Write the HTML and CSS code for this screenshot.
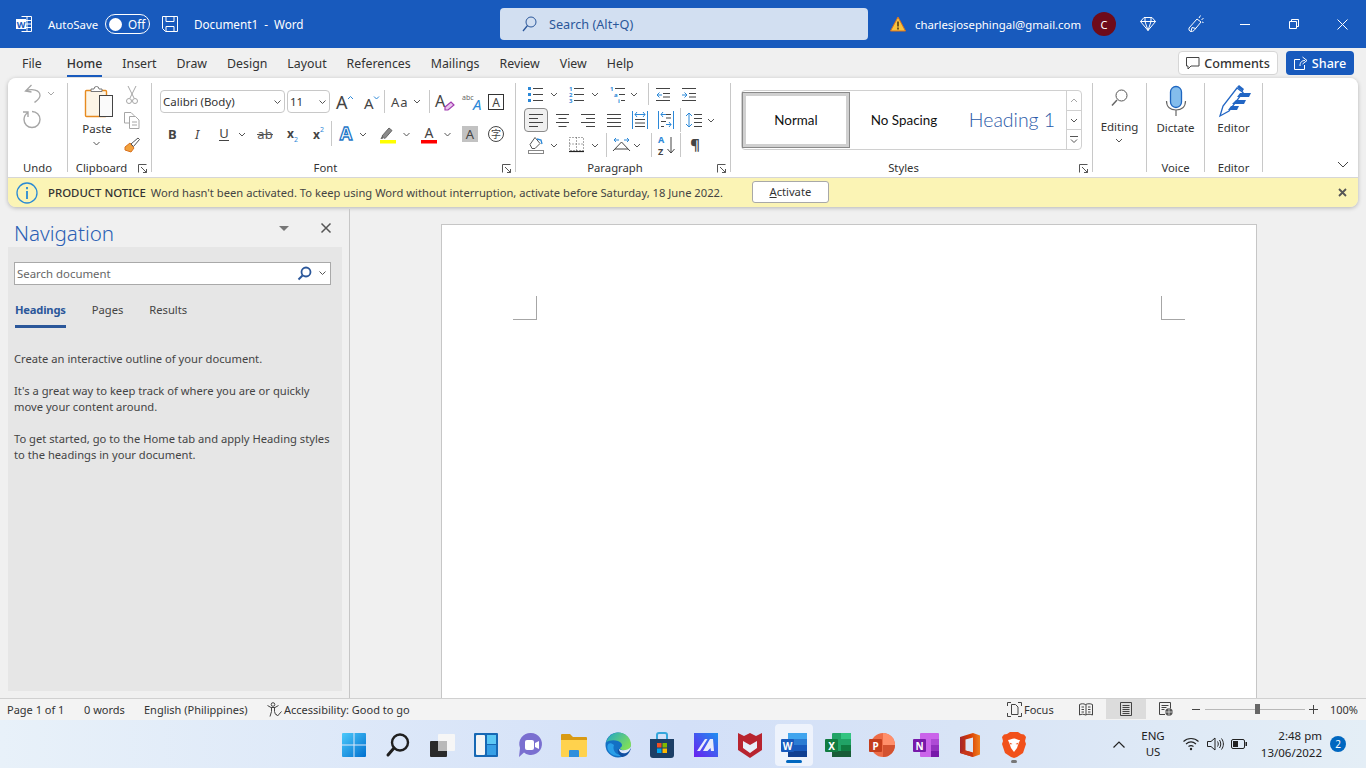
FILE: index.html
```html
<!DOCTYPE html>
<html lang="en">
<head>
    <meta charset="UTF-8">
    <title>Document1 - Word</title>
    <link rel="stylesheet" href="styles.css">
</head>
<body>
    <!-- title bar -->
    <header class="titlebar">
        <svg class="tb-logo" width="16" height="16" viewBox="0 0 16 16"><path class="w-ln" d="M5.500 .5h10v15h-10M9 4.500h6.500M9 8h6.500M9 11.500h6.500M11 .5v15"/><rect x="0" y="3" width="10" height="10" fill="#fff"/><text class="ic-t" x="5" y="11.500" text-anchor="middle" font-size="9" font-weight="700" fill="#185abd">W</text></svg>
        <span class="autosave">AutoSave</span>
        <span class="toggle"><i class="knob"></i><span>Off</span></span>
        <svg class="tb-save" width="16" height="16" viewBox="0 0 16 16"><path class="w-ln" d="M.5 .5h15v15h-12l-3-3zM4 .5v5h8v-5M4 15.500v-5h8v5"/></svg>
        <span class="doc-title">Document1&nbsp; -&nbsp; Word</span>
        <div class="searchbox">
            <svg width="15" height="16" viewBox="0 0 15 16"><circle cx="9" cy="6" r="5" fill="none" stroke="#2b579a"/><path d="M5.500 9.500 1 15" stroke="#2b579a" stroke-width="1.300"/></svg>
            <span>Search (Alt+Q)</span>
        </div>
        <svg class="tb-warn" width="16" height="16" viewBox="0 0 16 16"><path d="M8 1 15.500 15H.5z" fill="#f7c33d" stroke="#d9701e"/><path d="M8 5.500v5M8 11.500v2" stroke="#4a3410" stroke-width="1.500"/></svg>
        <span class="email">charlesjosephingal@gmail.com</span>
        <span class="avatar">C</span>
        <svg class="tb-diamond" width="16" height="16" viewBox="0 0 16 16"><path class="w-ln" d="M4 1.500h8l3.500 4L8 14.500.5 5.500zM.5 5.500h15M5 1.500 5 5.500 8 14.500 11 5.500 11 1.500"/></svg>
        <svg class="tb-pen" width="16" height="18" viewBox="0 0 16 18"><path class="w-ln" d="M1 13 9 4l4 3-7 8.500c-2 1.500-4 1.500-5-.5zM3 16.500l1-4 4 1M11 3l1.500-2.500M13.500 4.500l2-1M14 7l1.500.5"/></svg>
        <svg class="tb-min" width="10" height="10" viewBox="0 0 10 10"><path class="w-ln" d="M0 5.500h10"/></svg>
        <svg class="tb-max" width="10" height="10" viewBox="0 0 10 10"><path class="w-ln" d="M.5 2.500h7v7h-7zM2.500 2.500V.5h7v7h-2"/></svg>
        <svg class="tb-close" width="11" height="11" viewBox="0 0 11 11"><path class="w-ln" d="M.5 .5l10 10M10.500 .5l-10 10"/></svg>
    </header>

    <!-- tabs -->
    <nav class="tabs">
        <a class="tab tab-file">File</a>
        <a class="tab tab-home">Home</a>
        <a class="tab">Insert</a>
        <a class="tab">Draw</a>
        <a class="tab">Design</a>
        <a class="tab">Layout</a>
        <a class="tab">References</a>
        <a class="tab">Mailings</a>
        <a class="tab">Review</a>
        <a class="tab">View</a>
        <a class="tab">Help</a>
        <button class="btn-comments">
            <svg width="14" height="14" viewBox="0 0 14 14"><path class="ln-d" d="M.5 1.500h12.500v8.500H5l-3 3v-3H.5z"/></svg>
            Comments
        </button>
        <button class="btn-share">
            <svg width="14" height="14" viewBox="0 0 14 14"><path class="w-ln" d="M6 3.500H.5v10h10V9M6 10c0-4 2-5.500 5-5.500M8.500 1l4.500 3.500-4.500 3.500"/></svg>
            Share
        </button>
    </nav>

    <!-- ribbon -->
    <div class="ribbon-wrap">
        <section class="ribbon">
            <div class="group g-undo">
                <svg width="59" height="26" viewBox="0 0 59 26"><path class="ln-dis" stroke-width="1.300" d="M23.500 2 17.500 8l6 1M17.500 8c6-2.500 14.500-1.500 14.500 4.500 0 3-3 5-5.500 7"/><path class="ln-dis" d="M40 9l3 3 3-3"/></svg>
                <svg width="59" height="24" viewBox="0 0 59 24"><path class="ln-dis" stroke-width="1.400" d="M20 3.500c-3 2-4 4.500-4 7a8 8 0 1 0 8-8M15 3h5V8"/></svg>
                <div class="foot"><span class="glabel">Undo</span></div>
            </div>

            <div class="group g-clip">
                <div class="clip-body">
                    <div class="paste">
                        <svg width="56" height="34" viewBox="0 0 56 34"><rect x="17.500" y="7.500" width="21" height="26" rx="1" fill="#fdf5e6" stroke="#e78a1e" stroke-width="1.400"/><path d="M23 8.500v-2.500h3a2.500 2.500 0 0 1 5 0h3v2.500z" fill="#fff" stroke="#777"/><rect x="31.500" y="12.500" width="13" height="21" fill="#fafafa" stroke="#444"/></svg>
                        <span>Paste</span>
                        <svg width="56" height="13" viewBox="0 0 56 13"><path class="ln" d="M25.500 5l3 3 3-3"/></svg>
                    </div>
                    <div class="clip-side">
                        <svg width="16" height="26" viewBox="0 0 16 26"><path class="ln-dis" d="M4 1l6 12M12 1 6 13"/><circle class="ln-dis" cx="5" cy="16" r="2.500"/><circle class="ln-dis" cx="11" cy="16" r="2.500"/></svg>
                        <svg width="16" height="26" viewBox="0 0 16 26"><path class="ln-dis" d="M5 12H.5V1.500H7l3 3v1M5.500 5.500h6l3.500 3.500v8.500H5.500zM8 11h5M8 14h5"/></svg>
                        <svg width="16" height="20" viewBox="0 0 16 20"><path d="M1 10l5-4 4 5-3 4-6-2z" fill="#f2a13c" stroke="#d9701e"/><path d="M7 7l7-6 1.500 1.500-6 7z" fill="#fff" stroke="#555"/></svg>
                    </div>
                </div>
                <div class="foot"><span class="glabel">Clipboard</span><svg class="launch" width="16" height="14" viewBox="0 0 16 14"><path class="ln" d="M3.500 11.500v-8h8M6 6l5.500 5.500M11.500 8v3.500H8"/></svg></div>
            </div>

            <div class="group g-font">
                <div class="frow f1">
                    <div class="select s-font">Calibri (Body)<svg width="7" height="4" viewBox="0 0 7 4"><path class="ln" d="M.5 .5l3 3 3-3"/></svg></div>
                    <div class="select s-size">11<svg width="7" height="4" viewBox="0 0 7 4"><path class="ln" d="M.5 .5l3 3 3-3"/></svg></div>
                    <svg width="34" height="20" viewBox="0 0 34 20"><text class="ic-t" x="6" y="17" font-size="18" fill="#444">A</text><path d="M18 7l2.500-2.500L23 7" fill="none" stroke="#2b88d8"/></svg>
                    <svg width="20" height="20" viewBox="0 0 20 20"><text class="ic-t" x="0" y="16.500" font-size="15" fill="#444">A</text><path d="M10 4.500l2.500 2.500L15 4.500" fill="none" stroke="#2b88d8"/></svg>
                    <span class="vr"></span>
                    <svg width="44" height="20" viewBox="0 0 44 20"><text class="ic-t" x="6" y="15" font-size="13" letter-spacing="1" fill="#444">Aa</text><path class="ln" d="M29 8l3 3 3-3"/></svg>
                    <span class="vr"></span>
                    <svg width="32" height="20" viewBox="0 0 32 20"><text class="ic-t" x="5" y="15" font-size="16" fill="#444">A</text><path d="M15 15l6-5 3 3-6 5h-3z" fill="#e9c7ee" stroke="#a23cb0" stroke-width="1.200"/></svg>
                    <svg width="26" height="20" viewBox="0 0 26 20"><text class="ic-t" x="0" y="8" font-size="7" fill="#666">abc</text><text class="ic-t" x="11" y="18" font-size="15" font-style="italic" fill="#2b88d8">A</text></svg>
                    <svg width="16" height="16" viewBox="0 0 16 16"><rect x=".5" y=".5" width="15" height="15" fill="none" stroke="#333"/><text class="ic-t" x="8" y="13" text-anchor="middle" font-size="12" fill="#444">A</text></svg>
                </div>
                <div class="frow f2">
                    <svg width="30" height="18" viewBox="0 0 30 18"><text class="ic-t" x="8" y="14" font-size="13" font-weight="700" fill="#444">B</text></svg>
                    <svg width="24" height="18" viewBox="0 0 24 18"><text class="ic-t" x="5" y="14" font-size="13" font-style="italic" fill="#444">I</text></svg>
                    <svg width="20" height="18" viewBox="0 0 20 18"><text class="ic-t" x="10" y="13" text-anchor="middle" font-size="13" fill="#444">U</text><path class="ln-d" d="M5 15.500h10"/></svg>
                    <svg width="16" height="18" viewBox="0 0 16 18"><path class="ln" d="M5 8l3 3 3-3"/></svg>
                    <svg width="32" height="18" viewBox="0 0 32 18"><text class="ic-t" x="15" y="14" text-anchor="middle" font-size="13" fill="#555">ab</text><path class="ln" d="M7 9.500h16"/></svg>
                    <svg width="24" height="18" viewBox="0 0 24 18"><text class="ic-t" x="5" y="13" font-size="12" font-weight="700" fill="#444">x</text><text class="ic-t" x="12" y="17" font-size="7" fill="#2b88d8">2</text></svg>
                    <svg width="25" height="18" viewBox="0 0 25 18"><text class="ic-t" x="7" y="14" font-size="12" font-weight="700" fill="#444">x</text><text class="ic-t" x="14" y="7" font-size="7" fill="#2b88d8">2</text></svg>
                    <span class="vr"></span>
                    <svg width="26" height="18" viewBox="0 0 26 18"><text class="ic-t" x="14" y="15" text-anchor="middle" font-size="18" font-weight="700" fill="#fff" stroke="#1e78c8" stroke-width="1.300">A</text></svg>
                    <svg width="12" height="18" viewBox="0 0 12 18"><path class="ln" d="M2 8l3 3 3-3"/></svg>
                    <svg width="30" height="18" viewBox="0 0 30 18"><path d="M12 11l7-8 3 2.500-7 8z" fill="#8a8a8a" stroke="#666"/><path d="M12 11l-1.500 3 3-.5" fill="#555"/><rect x="10" y="15" width="16" height="3.500" fill="#ffff00"/></svg>
                    <svg width="14" height="18" viewBox="0 0 14 18"><path class="ln" d="M3.500 8l3 3 3-3"/></svg>
                    <svg width="26" height="18" viewBox="0 0 26 18"><text class="ic-t" x="15" y="13" text-anchor="middle" font-size="14" fill="#444">A</text><rect x="7" y="15" width="16" height="3.500" fill="#ff0000"/></svg>
                    <svg width="16" height="18" viewBox="0 0 16 18"><path class="ln" d="M4.500 8l3 3 3-3"/></svg>
                    <svg width="26" height="18" viewBox="0 0 26 18"><rect x="6" y="1" width="16" height="16" fill="#c2c2c2"/><text class="ic-t" x="14" y="14" text-anchor="middle" font-size="13" fill="#444">A</text></svg>
                    <svg width="28" height="18" viewBox="0 0 28 18"><circle cx="14" cy="9" r="7.500" fill="none" stroke="#444"/><text class="ic-c" x="14" y="13" text-anchor="middle" font-size="10" fill="#444">字</text></svg>
                </div>
                <div class="foot"><span class="glabel">Font</span><svg class="launch" width="16" height="14" viewBox="0 0 16 14"><path class="ln" d="M3.500 11.500v-8h8M6 6l5.500 5.500M11.500 8v3.500H8"/></svg></div>
            </div>

            <div class="group g-para">
                <div class="prow p1">
                    <svg width="32" height="20" viewBox="0 0 32 20"><path d="M12 3h3v3h-3zM12 9h3v3h-3zM12 15h3v3h-3z" fill="#2b88d8"/><path class="ln-d" d="M17 4.500h10M17 10.500h10M17 16.500h10"/></svg>
                    <svg width="12" height="20" viewBox="0 0 12 20"><path class="ln" d="M3 9l3 3 3-3"/></svg>
                    <svg width="29" height="20" viewBox="0 0 29 20"><text class="ic-t" font-size="6" font-weight="700" fill="#2b88d8"><tspan x="9" y="7">1</tspan><tspan x="9" y="13">2</tspan><tspan x="9" y="19">3</tspan></text><path class="ln-d" d="M14 4.500h10M14 10.500h10M14 16.500h10"/></svg>
                    <svg width="12" height="20" viewBox="0 0 12 20"><path class="ln" d="M3 9l3 3 3-3"/></svg>
                    <svg width="27" height="20" viewBox="0 0 27 20"><text class="ic-t" font-size="6" font-weight="700" fill="#2b88d8"><tspan x="9" y="7">1</tspan><tspan x="13" y="13">a</tspan><tspan x="17" y="19">i</tspan></text><path class="ln-d" d="M14 4.500h10M18 10.500h6M20 16.500h4"/></svg>
                    <svg width="20" height="20" viewBox="0 0 20 20"><path class="ln" d="M3 9l3 3 3-3"/></svg>
                    <span class="vr"></span>
                    <svg width="26" height="20" viewBox="0 0 26 20"><path class="ln-d" d="M7 4.500h14M14 9.500h7M14 13h7M7 16.500h14"/><path class="ln-b" d="M8 11h5M10.500 8.500 8 11l2.500 2.500"/></svg>
                    <svg width="26" height="20" viewBox="0 0 26 20"><path class="ln-d" d="M7 4.500h14M14 9.500h7M14 13h7M7 16.500h14"/><path class="ln-b" d="M7 11h5M9.500 8.500 12 11l-2.500 2.500"/></svg>
                </div>
                <div class="prow p2">
                    <span class="align-on"><svg width="14" height="13" viewBox="0 0 14 13"><path class="ln-d" d="M0 .5h14M0 4.500h9M0 8.500h14M0 12.500h9"/></svg></span>
                    <svg width="27" height="14" viewBox="0 0 27 14"><path class="ln-d" d="M8 1.500h13M10.500 5.500h8M8 9.500h13M10.500 13.500h8"/></svg>
                    <svg width="26" height="14" viewBox="0 0 26 14"><path class="ln-d" d="M6 1.500h14M11 5.500h9M6 9.500h14M11 13.500h9"/></svg>
                    <svg width="26" height="14" viewBox="0 0 26 14"><path class="ln-d" d="M6 1.500h14M6 5.500h14M6 9.500h14M6 13.500h14"/></svg>
                    <svg width="26" height="18" viewBox="0 0 26 18"><path class="ln-b" d="M5.500 0v18M20.500 0v18M8 3.500h10M10 1l-2 2.500L10 6M16 1l2 2.500L16 6"/><path class="ln-d" d="M8 8.500h10M8 12h10M8 15.500h10"/></svg>
                    <svg width="26" height="18" viewBox="0 0 26 18"><path class="ln-b" d="M5.500 0v18M20.500 0v18M8 3.500h5M10 1 8 3.500 10 6M13 13.500h5M16 11l2 2.500L16 16"/><path class="ln-d" d="M13 3.500h5M13 7h5M8 10.500h5M8 15.500h3"/></svg>
                    <span class="vr vr-p"></span>
                    <svg width="23" height="20" viewBox="0 0 23 20"><path class="ln-b" d="M8 3v14M5 6l3-3 3 3M5 14l3 3 3-3"/><path class="ln-d" d="M13 4.500h8M13 8.500h8M13 12.500h8M13 16.500h8"/></svg>
                    <svg width="14" height="20" viewBox="0 0 14 20"><path class="ln" d="M4 9l3 3 3-3"/></svg>
                </div>
                <div class="prow p3">
                    <svg width="32" height="20" viewBox="0 0 32 20"><path class="ln" d="M14 9.500l5-7 5 6-5 5h-3z"/><path d="M21 4l4 1 1 4" fill="none" stroke="#2b88d8" stroke-width="1.300"/><rect x="12.500" y="15.500" width="15" height="3" fill="#fff" stroke="#888"/></svg>
                    <svg width="12" height="20" viewBox="0 0 12 20"><path class="ln" d="M3 9l3 3 3-3"/></svg>
                    <svg width="29" height="20" viewBox="0 0 29 20"><path d="M9.500 2.500h14v13h-14zM16.500 2.500v13M9.500 9h14" fill="none" stroke="#555" stroke-dasharray="1 2"/><path d="M9 16.500h15" fill="none" stroke="#222" stroke-width="1.200"/></svg>
                    <svg width="17" height="20" viewBox="0 0 17 20"><path class="ln" d="M3 9l3 3 3-3"/></svg>
                    <span class="vr"></span>
                    <svg width="24" height="20" viewBox="0 0 24 20"><path class="ln-d" d="M6 16 14.500 7 23 16M8 14h13"/><path class="ln-b" d="M7 5h5M9 3 7 5l2 2M17 5h5M20 3l2 2-2 2"/></svg>
                    <svg width="20" height="20" viewBox="0 0 20 20"><path class="ln" d="M3 9l3 3 3-3"/></svg>
                    <span class="vr"></span>
                    <svg width="28" height="20" viewBox="0 0 28 20"><text class="ic-t" x="6" y="7.800" font-size="9" font-weight="700" fill="#2b88d8">A</text><text class="ic-t" x="6" y="20.200" font-size="9" font-weight="700" fill="#444">Z</text><path class="ln-d" d="M19 2v16M15.500 14l3.500 4 3.500-4"/></svg>
                    <span class="vr"></span>
                    <svg width="29" height="20" viewBox="0 0 29 20"><text class="ic-t" x="14" y="15" text-anchor="middle" font-size="15" font-weight="700" fill="#444">¶</text></svg>
                </div>
                <div class="foot"><span class="glabel">Paragraph</span><svg class="launch" width="16" height="14" viewBox="0 0 16 14"><path class="ln" d="M3.500 11.500v-8h8M6 6l5.500 5.500M11.500 8v3.500H8"/></svg></div>
            </div>

            <div class="group g-styles">
                <div class="gallery">
                    <div class="style style-on">Normal</div>
                    <div class="style style-ns">No Spacing</div>
                    <div class="style style-h1">Heading 1</div>
                    <div class="gal-btns">
                        <span><svg width="8" height="5" viewBox="0 0 8 5"><path class="ln-dis" d="M1 4l3-3 3 3"/></svg></span>
                        <span><svg width="8" height="5" viewBox="0 0 8 5"><path class="ln" d="M1 1l3 3 3-3"/></svg></span>
                        <span><svg width="8" height="8" viewBox="0 0 8 8"><path class="ln" d="M0 .5h8M1 3.500l3 3 3-3"/></svg></span>
                    </div>
                </div>
                <div class="foot"><span class="glabel">Styles</span><svg class="launch" width="16" height="14" viewBox="0 0 16 14"><path class="ln" d="M3.500 11.500v-8h8M6 6l5.500 5.500M11.500 8v3.500H8"/></svg></div>
            </div>

            <div class="group g-edit">
                <svg width="53" height="24" viewBox="0 0 53 24"><circle cx="28.500" cy="9.500" r="5.500" fill="none" stroke="#555"/><path d="M24 14l-5 5.500" stroke="#666" stroke-width="1.500"/></svg>
                <span class="big-label edit-l">Editing</span>
                <svg width="53" height="12" viewBox="0 0 53 12"><path class="ln" d="M23 4l3 3 3-3"/></svg>
                <div class="foot"></div>
            </div>

            <div class="group g-voice">
                <svg width="57" height="34" viewBox="0 0 57 34"><rect x="23.500" y="3.500" width="11" height="21" rx="5.500" fill="#84bdec" stroke="#1e66c0" stroke-width="1.300"/><path d="M19.500 18c0 6 4 9 9.500 9s9.500-3 9.500-9M29 27v6" fill="none" stroke="#666" stroke-width="1.200"/></svg>
                <span class="big-label">Dictate</span>
                <div class="foot"><span class="glabel">Voice</span></div>
            </div>

            <div class="group g-editor">
                <svg width="57" height="34" viewBox="0 0 57 34"><path d="M15 33l3-10L32 5l6 4.500L24 28z" fill="#fff" stroke="#2266c4" stroke-width="1.300"/><path d="M32 4l2-2 5 4-1.500 2.500z" fill="#2266c4"/><path d="M35 10h11l-2 4H32zM31 17h10l-2 4H27zM26 23h8l-2 4h-9z" fill="#2266c4"/></svg>
                <span class="big-label">Editor</span>
                <div class="foot"><span class="glabel">Editor</span></div>
            </div>

            <svg class="collapse" width="12" height="7" viewBox="0 0 12 7"><path class="ln-d" d="M1 1l5 5 5-5"/></svg>
        </section>

        <div class="notice">
            <svg class="notice-i" width="22" height="22" viewBox="0 0 22 22"><circle cx="11" cy="11" r="10" fill="none" stroke="#2a8ad4" stroke-width="1.300"/><path d="M11 9v8M11 5v2.300" stroke="#2a8ad4" stroke-width="1.800"/></svg>
            <b>PRODUCT NOTICE</b>
            <span class="notice-msg">Word hasn't been activated. To keep using Word without interruption, activate before Saturday, 18 June 2022.</span>
            <button class="btn-activate"><u>A</u>ctivate</button>
            <svg class="notice-x" width="9" height="9" viewBox="0 0 9 9"><path d="M1 1l7 7M8 1 1 8" stroke="#555" stroke-width="1.800"/></svg>
        </div>
    </div>

    <!-- navigation pane + page -->
    <main class="workspace">
        <aside class="navpane">
            <div class="nav-head">
                <h2>Navigation</h2>
                <svg width="10" height="5" viewBox="0 0 10 5"><path d="M0 0h10L5 5z" fill="#777"/></svg>
                <svg class="nav-x" width="10" height="10" viewBox="0 0 10 10"><path d="M.5 .5l9 9M9.500 .5l-9 9" stroke="#555" stroke-width="1.500"/></svg>
            </div>
            <div class="nav-panel">
                <div class="nav-search">
                    <span>Search document</span>
                    <svg width="15" height="15" viewBox="0 0 15 15"><circle cx="9" cy="6" r="4.500" fill="none" stroke="#2b579a" stroke-width="1.800"/><path d="M5.500 9.500 1.500 13.500" stroke="#2b579a" stroke-width="2"/></svg>
                    <svg width="7" height="4" viewBox="0 0 7 4"><path class="ln" d="M.5 .5l3 3 3-3"/></svg>
                </div>
                <div class="nav-tabs">
                    <a class="nav-tab nav-tab-on">Headings</a>
                    <a class="nav-tab">Pages</a>
                    <a class="nav-tab">Results</a>
                </div>
                <div class="nav-text">
                    <p>Create an interactive outline of your document.</p>
                    <p>It's a great way to keep track of where you are or quickly move your content around.</p>
                    <p>To get started, go to the Home tab and apply Heading styles to the headings in your document.</p>
                </div>
            </div>
        </aside>
        <div class="doc-area">
            <div class="page">
                <span class="mark mark-l"></span>
                <span class="mark mark-r"></span>
            </div>
        </div>
    </main>

    <!-- status bar -->
    <footer class="statusbar">
        <span class="st-page">Page 1 of 1</span>
        <span class="st-words">0 words</span>
        <span class="st-lang">English (Philippines)</span>
        <svg class="st-a11y" width="15" height="15" viewBox="0 0 15 15"><circle cx="6" cy="2.500" r="1.800" fill="none" stroke="#444"/><path d="M.5 3.500 4 5.500h4l3.500-2M4.500 5.500v4l-1.500 5M7.500 5.500v4l1 3M9 12l1.500 2 4-4.500" fill="none" stroke="#444"/></svg>
        <span>Accessibility: Good to go</span>
        <svg class="st-focus" width="15" height="15" viewBox="0 0 15 15"><path class="ln-d" d="M.5 4V.5H4M11 .5h3.500V4M.5 11v3.500H4M11 14.500h3.500V11M4.500 12.500v-10h4l2.500 2.500v7.500z"/></svg>
        <span class="st-focus-t">Focus</span>
        <svg class="st-read" width="14" height="13" viewBox="0 0 14 13"><path class="ln-d" d="M.5 1.500c2-1 4-1 6 0 2-1 5-1 7 0v10.500c-2-1-5-1-7 0-2-1-4-1-6 0zM7 1.500V12M2.500 4h2.500M2.500 6.500h2.500M2.500 9h2.500M9 4h2.500M9 6.500h2.500M9 9h2.500"/></svg>
        <span class="st-print"><svg width="12" height="14" viewBox="0 0 12 14"><path class="ln-d" d="M.5 .5h11v13H.5zM2.500 3.500h7M2.500 5.500h7M2.500 7.500h7M2.500 9.500h7M2.500 11.500h7"/></svg></span>
        <svg class="st-web" width="14" height="14" viewBox="0 0 14 14"><path class="ln-d" d="M6 12.500H.5V.5h11v6M2.500 3.500h7M2.500 5.500h5M2.500 7.500h3"/><circle cx="10" cy="10" r="3.700" fill="#555"/><path d="M6.500 10h7M10 6.500v7" stroke="#f3f3f3" stroke-width=".7"/></svg>
        <svg class="st-minus" width="8" height="8" viewBox="0 0 8 8"><path class="ln-d" d="M0 4.500h8"/></svg>
        <div class="zoom-track"><i class="zoom-thumb"></i></div>
        <svg class="st-plus" width="9" height="9" viewBox="0 0 9 9"><path class="ln-d" d="M0 4.500h9M4.500 0v9"/></svg>
        <span class="st-zoom">100%</span>
    </footer>

    <!-- windows taskbar -->
    <div class="taskbar">
        <div class="tb-apps">
            <span class="app"><svg width="24" height="24" viewBox="0 0 24 24"><defs><linearGradient id="win" x1="0" y1="0" x2="1" y2="1"><stop offset="0" stop-color="#4cc9fb"/><stop offset="1" stop-color="#0070cf"/></linearGradient></defs><path d="M0 1a1 1 0 0 1 1-1h10.500v11.500H0zM12.500 0H23a1 1 0 0 1 1 1v10.500H12.500zM0 12.500h11.500V24H1a1 1 0 0 1-1-1zM12.500 12.500H24V23a1 1 0 0 1-1 1H12.500z" fill="url(#win)"/></svg></span>
            <span class="app"><svg width="24" height="24" viewBox="0 0 24 24"><circle cx="14" cy="9.500" r="8" fill="none" stroke="#1f1f1f" stroke-width="2.400"/><path d="M8 15 2 22" stroke="#1f1f1f" stroke-width="3" stroke-linecap="round"/></svg></span>
            <span class="app"><svg width="26" height="24" viewBox="0 0 26 24"><rect x="9" y="1" width="17" height="17" rx="1" fill="#f6f6f6"/><rect x="1" y="8" width="17" height="16" rx="1" fill="#2a2a2a"/><rect x="9" y="8" width="9" height="10" fill="#b9b9b9"/></svg></span>
            <span class="app"><svg width="24" height="24" viewBox="0 0 24 24"><rect x="0" y="0" width="24" height="24" rx="1" fill="#1768b4"/><rect x="2" y="2" width="9" height="20" rx="1" fill="#f5f5f5"/><rect x="13" y="2" width="9" height="9" fill="#5cc8f5"/><rect x="13" y="12" width="9" height="10" fill="#37a0e6"/></svg></span>
            <span class="app"><svg width="24" height="26" viewBox="0 0 24 26"><path d="M13 1a11 11 0 1 1-7 19.500L1 25l1-9A11 11 0 0 1 13 1z" fill="#7a6fd0"/><rect x="7" y="8" width="9" height="10" rx="2" fill="#fff"/><path d="M17 11l4-2v8l-4-2z" fill="#fff"/></svg></span>
            <span class="app"><svg width="26" height="24" viewBox="0 0 26 24"><path d="M0 2a1 1 0 0 1 1-1h8l3 3h13a1 1 0 0 1 1 1v3H0z" fill="#d99a13"/><path d="M0 7h26v16a1 1 0 0 1-1 1H1a1 1 0 0 1-1-1z" fill="#ffd24d"/><path d="M8 18a1 1 0 0 1 1-1h8a1 1 0 0 1 1 1v6H8z" fill="#2f8fdc"/></svg></span>
            <span class="app"><svg width="26" height="26" viewBox="0 0 26 26"><defs><linearGradient id="edge" x1="0" y1="0" x2="1" y2=".6"><stop offset="0" stop-color="#1fa5c9"/><stop offset="1" stop-color="#7ede5a"/></linearGradient></defs><circle cx="13" cy="13" r="12.500" fill="#1470c4"/><path d="M9 13c-2 5 2 11 9 10-5 2-12 1-15-5-2-5 1-9 6-5z" fill="#2a9fe8"/><path d="M13 17c3 3 9 3 13-1-1 5-5 9-9 9-3-2-5-5-4-8z" fill="#0f4ea0"/><path d="M1 11C3 4 8 .5 13 .5c8 0 13 6 13 12 0 4-3 6-6 6-3 0-5-1-5-2.500 2-1 2.500-3 1.500-4.500-3-4-12-4-15.500-1z" fill="url(#edge)"/><path d="M14 17c3 2 8 2 12-2-.5 2-2 5-5 6-4 1-7-1-7-4z" fill="#dfe8f8"/></svg></span>
            <span class="app"><svg width="24" height="26" viewBox="0 0 24 26"><path d="M7 7V3a2 2 0 0 1 2-2h6a2 2 0 0 1 2 2v4" fill="none" stroke="#35a6dc" stroke-width="2"/><path d="M0 7h24v16a3 3 0 0 1-3 3H3a3 3 0 0 1-3-3z" fill="#1c3f66"/><rect x="7" y="11" width="4.500" height="4.500" fill="#f25022"/><rect x="12.500" y="11" width="4.500" height="4.500" fill="#7fba00"/><rect x="7" y="16.500" width="4.500" height="4.500" fill="#00a4ef"/><rect x="12.500" y="16.500" width="4.500" height="4.500" fill="#ffb900"/></svg></span>
            <span class="app"><svg width="24" height="24" viewBox="0 0 24 24"><defs><linearGradient id="mw" x1="0" y1="1" x2="1" y2="0"><stop offset="0" stop-color="#6a1ff0"/><stop offset="1" stop-color="#1e90f0"/></linearGradient></defs><rect width="24" height="24" fill="url(#mw)"/><path d="M3 18 11 6h2.500L6 18zM9 18 16 6h3l1 12h-3l-.5-3-3 3z" fill="#e8ecfb"/></svg></span>
            <span class="app"><svg width="24" height="26" viewBox="0 0 24 26"><path d="M0 1l6 3 6-3 6 3 6-3v17l-12 8-12-8z" fill="#b8242f"/><path d="M5 9l7 4 7-4v7l-7 5-7-5z" fill="#e7eef9"/></svg></span>
            <span class="app app-on"><svg width="26" height="24" viewBox="0 0 26 24"><rect x="7" y="0" width="19" height="24" rx="1" fill="#2b7cd3"/><rect x="7" y="0" width="19" height="6" fill="#41a5ee"/><rect x="7" y="12" width="19" height="6" fill="#185abd"/><rect x="7" y="18" width="19" height="6" fill="#103f91"/><rect x="0" y="6" width="13" height="13" rx="1" fill="#185abd"/><text class="ic-t" x="6.500" y="16.500" text-anchor="middle" font-size="10" font-weight="700" fill="#fff">W</text></svg><i class="running"></i></span>
            <span class="app"><svg width="26" height="24" viewBox="0 0 26 24"><rect x="7" y="0" width="19" height="24" rx="1" fill="#21a366"/><rect x="16" y="0" width="10" height="6" fill="#33c481"/><rect x="7" y="6" width="9" height="6" fill="#21a366"/><rect x="16" y="12" width="10" height="6" fill="#107c41"/><rect x="7" y="18" width="19" height="6" fill="#185c37"/><rect x="0" y="6" width="13" height="13" rx="1" fill="#107c41"/><text class="ic-t" x="6.500" y="16.500" text-anchor="middle" font-size="10" font-weight="700" fill="#fff">X</text></svg></span>
            <span class="app"><svg width="26" height="24" viewBox="0 0 26 24"><circle cx="14" cy="12" r="12" fill="#ed6c47"/><path d="M14 0a12 12 0 0 1 12 12H14z" fill="#ff8f6b"/><path d="M14 12h12a12 12 0 0 1-12 12z" fill="#d35230"/><rect x="0" y="6" width="13" height="13" rx="1" fill="#c43e1c"/><text class="ic-t" x="6.500" y="16.500" text-anchor="middle" font-size="10" font-weight="700" fill="#fff">P</text></svg></span>
            <span class="app"><svg width="26" height="24" viewBox="0 0 26 24"><rect x="7" y="0" width="19" height="24" rx="1" fill="#ca64ea"/><rect x="18" y="6" width="8" height="6" fill="#ae4bd5"/><rect x="18" y="12" width="8" height="6" fill="#9332bf"/><rect x="18" y="18" width="8" height="6" fill="#7719aa"/><rect x="0" y="6" width="13" height="13" rx="1" fill="#7719aa"/><text class="ic-t" x="6.500" y="16.500" text-anchor="middle" font-size="10" font-weight="700" fill="#fff">N</text></svg></span>
            <span class="app"><svg width="20" height="24" viewBox="0 0 20 24"><defs><linearGradient id="off" x1="0" y1="0" x2="1" y2="0"><stop offset="0" stop-color="#a4262c"/><stop offset=".5" stop-color="#d83b01"/><stop offset="1" stop-color="#f08020"/></linearGradient></defs><path d="M0 4 13 0l7 2.500v19L13 24 0 20z" fill="url(#off)"/><path d="M5.500 6.500 13 4.500v15L5.500 17.500z" fill="#dbe5f6"/><path d="M0 20l13 4-.5-4.500-7-2z" fill="#c8371a"/></svg></span>
            <span class="app app-brave"><svg width="24" height="26" viewBox="0 0 24 26"><path d="M5 2 8 0h8l3 2 3 .5 2 2.500-1 4 1 3-3 9-6 4-3 1-3-1-6-4-3-9 1-3-1-4 2-2.500z" fill="#f1511b"/><path d="M6 8c2 0 4-1.500 6-1.500S16 8 18 8l-2 5-1 3-3 4-3-4-1-3z" fill="#fff"/><path d="M7.500 10.500l3 1.500-2 .5zM16.500 10.500l-3 1.500 2 .5z" fill="#f1511b"/></svg><i class="running running-g"></i></span>
        </div>
        <div class="tray">
            <svg class="tray-up" width="12" height="7" viewBox="0 0 12 7"><path d="M.5 6.500 6 1l5.500 5.500" fill="none" stroke="#222" stroke-width="1.200"/></svg>
            <div class="tray-lang">ENG<br>US</div>
            <svg width="16" height="14" viewBox="0 0 16 14"><path d="M.5 4.500c4-4 11-4 15 0M3 7c3-2.500 7-2.500 10 0M5.500 9.500c1.500-1 3.500-1 5 0" fill="none" stroke="#222" stroke-width="1.100"/><circle cx="8" cy="12" r="1.200" fill="#222"/></svg>
            <svg class="tray-vol" width="17" height="14" viewBox="0 0 17 14"><path d="M.5 4.500H4L8 1v12L4 9.500H.5zM10.500 4.500c1 1.500 1 3.500 0 5M12.500 3c1.700 2.500 1.700 5.500 0 8M14.500 1.500c2.500 3.500 2.500 7.500 0 11" fill="none" stroke="#222"/></svg>
            <svg class="tray-bat" width="16" height="10" viewBox="0 0 16 10"><rect x=".5" y=".5" width="13" height="9" rx="1.500" fill="none" stroke="#222"/><rect x="2" y="2" width="5" height="6" fill="#222"/><rect x="14.500" y="3" width="1.500" height="4" fill="#222"/></svg>
            <div class="tray-clock">2:48 pm<br>13/06/2022</div>
            <span class="tray-badge">2</span>
        </div>
    </div>
</body>
</html>
```

FILE: styles.css
```css
* { box-sizing: border-box; }
html, body { height: 100%; }
body {
    margin: 0;
    width: 1366px;
    height: 768px;
    overflow: hidden;
    display: flex;
    flex-direction: column;
    background: #f0f0f0;
    color: #333;
    font-family: "Noto Sans", "Open Sans", sans-serif;
    font-size: 11.500px;
}
svg { display: block; flex: none; overflow: visible; }
p { margin: 0; }

/* svg helpers */
.ln { fill: none; stroke: #555; }
.ln-d { fill: none; stroke: #444; }
.ln-b { fill: none; stroke: #2b88d8; }
.ln-dis { fill: none; stroke: #a6a6a6; }
.w-ln { fill: none; stroke: #fff; }
.ic-t { font-family: "Noto Sans", sans-serif; }
.ic-c { font-family: "Noto Sans CJK SC", sans-serif; }

/* title bar */
.titlebar {
    height: 48px;
    background: #185abd;
    color: #fff;
    display: flex;
    align-items: center;
    padding-left: 16px;
    flex: none;
    font-size: 11.700px;
}
.autosave { margin-left: 16px; width: 57px; font-size: 11.400px; }
.toggle {
    width: 45px;
    height: 20px;
    border: 1px solid #fff;
    border-radius: 10px;
    display: flex;
    align-items: center;
    padding-left: 3px;
    gap: 6px;
}
.knob { width: 13px; height: 13px; border-radius: 50%; background: #fff; }
.tb-save { margin-left: 12px; }
.doc-title { margin-left: 16px; width: 306px; }
.searchbox {
    width: 368px;
    height: 32px;
    background: #d2dff1;
    border-radius: 4px;
    display: flex;
    align-items: center;
    padding-left: 22px;
    gap: 12px;
    color: #2b579a;
    font-size: 12.700px;
}
.tb-warn { margin-left: 22px; }
.email { margin-left: 9px; width: 173px; font-size: 11.350px; }
.avatar {
    width: 24px;
    height: 24px;
    border-radius: 50%;
    background: #6e0b1a;
    display: flex;
    align-items: center;
    justify-content: center;
    margin-left: 4px;
    font-size: 11px;
}
.tb-diamond { margin-left: 24px; }
.tb-pen { margin-left: 32px; }
.tb-min { margin-left: 36px; }
.tb-max { margin-left: 39px; }
.tb-close { margin-left: 38px; }

/* tabs */
.tabs {
    height: 30px;
    flex: none;
    display: flex;
    align-items: center;
    padding-left: 22px;
    gap: 20px;
    font-size: 12.350px;
}
.tab { position: relative; color: #333; }
.tab-file { margin-right: 5px; }
.tab-home { font-weight: 500; }
.tab-home::after {
    content: "";
    position: absolute;
    left: 0;
    right: 0;
    bottom: -5px;
    height: 2px;
    background: #185abd;
}
.btn-comments, .btn-share {
    height: 24px;
    border-radius: 4px;
    font: inherit;
    font-size: 12.600px;
    font-weight: 500;
    display: flex;
    align-items: center;
    justify-content: center;
    gap: 4px;
    padding: 0;
}
.btn-comments {
    margin-left: auto;
    width: 100px;
    background: #fff;
    border: 1px solid #d6d6d6;
    color: #333;
}
.btn-share {
    width: 68px;
    margin: 0 12px 0 -12px;
    background: #185abd;
    border: 0;
    color: #fff;
}

/* ribbon */
.ribbon-wrap {
    margin: 0 8px;
    flex: none;
    height: 129px;
    border-radius: 8px;
    box-shadow: 0 1px 4px rgba(0, 0, 0, .25);
}
.ribbon {
    height: 100px;
    background: #fff;
    border-radius: 8px 8px 0 0;
    border-bottom: 1px solid #d6d6d6;
    display: flex;
    align-items: flex-start;
    padding-top: 5px;
    position: relative;
}
.group {
    height: 89px;
    flex: none;
    border-right: 1px solid #c8c8c8;
    display: flex;
    flex-direction: column;
}
.foot {
    margin-top: auto;
    margin-bottom: -3px;
    height: 14px;
    display: flex;
    align-items: center;
    flex: none;
}
.glabel { flex: 1; text-align: center; line-height: 14px; font-size: 11.300px; color: #333; }
.launch { flex: none; }
.vr { width: 1px; align-self: stretch; background: #c8c8c8; flex: none; }

.g-undo { width: 60px; }
.g-clip { width: 84px; }
.clip-body { display: flex; }
.paste {
    width: 56px;
    display: flex;
    flex-direction: column;
    align-items: center;
}
.paste span { margin-top: 4px; margin-left: 2px; line-height: 16px; }
.clip-side { padding-top: 2px; }

.g-font { width: 364px; padding-left: 8px; }
.g-font .foot { margin-left: -8px; }
.frow { display: flex; align-items: center; }
.f1 { margin-top: 7px; height: 23px; }
.f2 { margin-top: 8px; height: 25px; }
.select {
    height: 23px;
    background: #fff;
    border: 1px solid #c8c8c8;
    border-radius: 4px;
    display: flex;
    align-items: center;
    justify-content: space-between;
    padding: 0 3px 0 2px;
    color: #333;
    flex: none;
}
.s-font { width: 125px; margin-right: 2px; }
.s-size { width: 43px; }

.g-para { width: 215px; }
.prow { display: flex; align-items: center; }
.p1 { height: 22px; }
.p2 { height: 24px; margin-top: 3px; padding-left: 8px; }
.p3 { height: 24px; margin-top: 1px; }
.align-on {
    width: 24px;
    height: 24px;
    display: flex;
    align-items: center;
    justify-content: center;
    background: #f0f0f0;
    border: 1px solid #8a8a8a;
    border-radius: 4px;
    flex: none;
}
.vr-p { margin-left: 1px; }

.g-styles { width: 362px; padding-left: 10px; }
.g-styles .foot { margin-left: -10px; }
.gallery {
    margin-top: 7px;
    width: 341px;
    height: 60px;
    border: 1px solid #d0d0d0;
    border-radius: 4px;
    display: flex;
    align-items: center;
    background: #fff;
}
.style {
    display: flex;
    align-items: center;
    justify-content: center;
    font-family: Lato, "Noto Sans", sans-serif;
    color: #111;
    flex: none;
    height: 56px;
}
.style-on {
    width: 108px;
    font-size: 13.400px;
    background: #fff;
    border: 1px solid #8a8a8a;
    outline: 3px solid #d0d0d0;
    outline-offset: -4px;
}
.style-ns { width: 108px; font-size: 13.400px; }
.style-h1 {
    width: 108px;
    height: 54px;
    font-size: 19.500px;
    font-weight: 300;
    color: #2b5aa8;
    padding-bottom: 2px;
}
.gal-btns {
    margin-left: auto;
    width: 15px;
    height: 58px;
    display: flex;
    flex-direction: column;
    border-left: 1px solid #d0d0d0;
}
.gal-btns span {
    flex: 1;
    display: flex;
    align-items: center;
    justify-content: center;
    border-bottom: 1px solid #d0d0d0;
}
.gal-btns span:last-child { border-bottom: 0; }

.g-edit { width: 54px; padding-top: 3px; }
.g-voice { width: 58px; }
.g-editor { width: 58px; }
.big-label { text-align: center; line-height: 16px; margin-top: 3px; }
.edit-l { margin-top: 9px; }
.collapse { position: absolute; right: 9px; top: 83px; }

/* activation notice */
.notice {
    height: 29px;
    background: #fbf4b5;
    border-radius: 0 0 8px 8px;
    display: flex;
    align-items: center;
    padding-left: 8px;
    font-size: 11.200px;
    color: #444;
}
.notice b { margin-left: 10px; font-weight: 500; font-size: 11.400px; color: #333; }
.notice-i { flex: none; }
.notice-msg { margin-left: 5px; width: 601px; white-space: nowrap; }
.btn-activate {
    width: 77px;
    height: 22px;
    margin-bottom: 2px;
    background: #fff;
    border: 1px solid #a8a8a8;
    border-radius: 3px;
    font: inherit;
    color: #333;
    padding: 0;
}
.notice-x { margin-left: auto; margin-right: 11px; }

/* workspace */
.workspace { flex: 1; display: flex; min-height: 0; margin-top: 2px; }
.navpane {
    width: 350px;
    flex: none;
    border-right: 1px solid #c6c6c6;
    display: flex;
    flex-direction: column;
    padding: 0 7px 7px 8px;
}
.nav-head {
    height: 38px;
    flex: none;
    display: flex;
    align-items: center;
    padding-left: 6px;
}
.nav-head h2 {
    margin: 9px 0 0;
    width: 265px;
    font-size: 20.600px;
    font-weight: 300;
    color: #2b5fb4;
}
.nav-x { margin-left: 32px; }
.nav-panel { flex: 1; background: #e6e6e6; padding: 15px 0 0 6px; font-size: 11.200px; }
.nav-search {
    width: 317px;
    height: 23px;
    background: #fff;
    border: 1px solid #a9a9a9;
    display: flex;
    align-items: center;
    padding: 0 4px 1px 2px;
    color: #666;
    font-size: 11.400px;
}
.nav-search span { flex: 1; }
.nav-search svg { margin-right: 2px; }
.nav-search svg:last-child { margin: 0 0 0 5px; }
.nav-tabs { display: flex; gap: 26px; margin: 15px 0 0 1px; }
.nav-tab { color: #444; line-height: 20px; padding-bottom: 5px; border-bottom: 3px solid transparent; }
.nav-tab-on { color: #2b579a; font-weight: 700; border-bottom-color: #2b579a; letter-spacing: -.2px; }
.nav-text { margin-top: 23px; line-height: 16px; color: #444; width: 322px; }
.nav-text p { margin-bottom: 16px; }

.doc-area { flex: 1; padding: 15px 0 0 91px; overflow: hidden; }
.page {
    width: 816px;
    height: 600px;
    background: #fff;
    border: 1px solid #c6c6c6;
    display: flex;
    justify-content: space-between;
    padding: 71px 71px 0;
    align-items: flex-start;
}
.mark { width: 24px; height: 24px; border-bottom: 1px solid #a6a6a6; }
.mark-l { border-right: 1px solid #a6a6a6; }
.mark-r { border-left: 1px solid #a6a6a6; }

/* status bar */
.statusbar {
    height: 22px;
    flex: none;
    background: #f3f3f3;
    border-top: 1px solid #d0d0d0;
    display: flex;
    align-items: center;
    padding-left: 7px;
    padding-bottom: 1px;
    font-size: 11px;
    color: #333;
}
.st-page { width: 77px; }
.st-words { width: 60px; }
.st-lang { width: 123px; }
.st-a11y { margin-right: 2px; }
.st-focus { margin-left: auto; }
.st-focus-t { margin-left: 2px; width: 55px; }
.st-print {
    margin-left: 13px;
    width: 40px;
    height: 100%;
    background: #dcdcdc;
    display: flex;
    align-items: center;
    justify-content: center;
}
.st-web { margin-left: 13px; }
.st-minus { margin-left: 19px; }
.zoom-track {
    margin-left: 5px;
    width: 100px;
    height: 1px;
    background: #b8b8b8;
    display: flex;
    justify-content: center;
    align-items: center;
}
.zoom-thumb { width: 5px; height: 10px; background: #666; flex: none; margin-left: 6px; }
.st-plus { margin-left: 4px; }
.st-zoom { margin: 0 8px 0 12px; }

/* taskbar */
.taskbar {
    height: 48px;
    flex: none;
    background: linear-gradient(90deg, #e8f1f9 0%, #d3e0f8 50%, #d8e4f6 70%, #e4eef6 100%);
    display: flex;
    align-items: flex-start;
    padding-left: 332px;
}
.tb-apps { display: flex; margin-top: 4px; }
.app {
    width: 38px;
    height: 42px;
    margin: 0 3px;
    display: flex;
    align-items: center;
    justify-content: center;
    border-radius: 4px;
    position: relative;
    flex: none;
}
.app-on { background: rgba(255, 255, 255, .6); }
.running {
    position: absolute;
    left: 11px;
    bottom: 3px;
    width: 16px;
    height: 3px;
    border-radius: 2px;
    background: #0067c0;
}
.running-g { left: 16px; width: 6px; background: #777; }
.tray {
    margin-left: 77px;
    height: 48px;
    display: flex;
    align-items: center;
    color: #222;
    font-size: 11.500px;
}
.tray-lang { margin: 0 18px 0 16px; text-align: center; line-height: 16px; width: 24px; }
.tray-vol { margin: 0 7px 0 8px; }
.tray-clock { margin-left: 0; width: 75px; text-align: right; line-height: 17px; }
.tray-badge {
    margin-left: 8px;
    width: 16px;
    height: 16px;
    border-radius: 50%;
    background: #0067c0;
    color: #fff;
    display: flex;
    align-items: center;
    justify-content: center;
    font-size: 10px;
}
```
